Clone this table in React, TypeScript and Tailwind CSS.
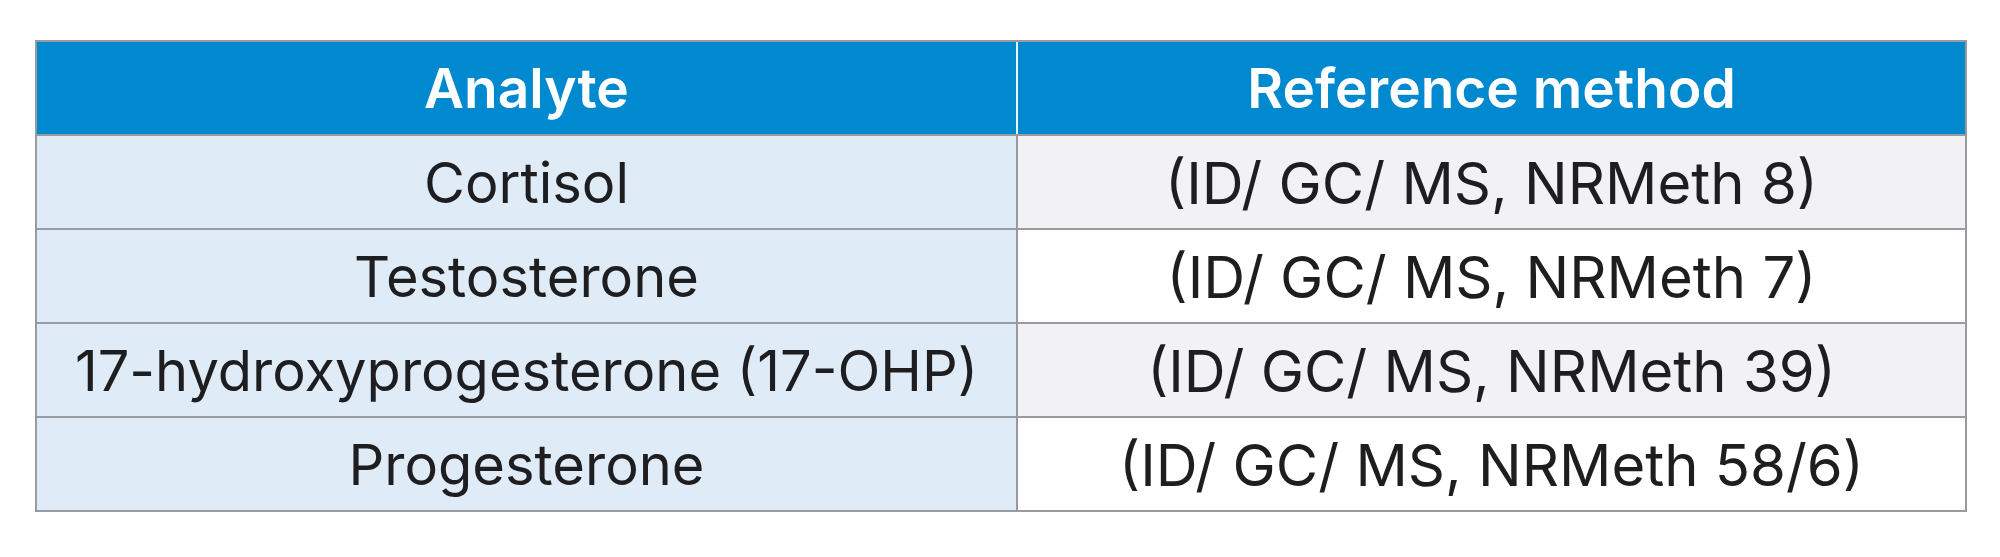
const rows = [
    { analyte: "Cortisol", method: "(ID/ GC/ MS, NRMeth 8)" },
    { analyte: "Testosterone", method: "(ID/ GC/ MS, NRMeth 7)" },
    { analyte: "17-hydroxyprogesterone (17-OHP)", method: "(ID/ GC/ MS, NRMeth 39)" },
    { analyte: "Progesterone", method: "(ID/ GC/ MS, NRMeth 58/6)" },
];

export default function App() {
    return (
        <div className="w-[2000px] h-[557px] bg-white pt-[40px] pl-[35px] font-['Inter',sans-serif]">
            <div className="w-[1932px] border-2 border-[#979ba0]">
                <div className="grid grid-cols-[981px_1fr] h-[92px] bg-[#0089cf] text-white font-semibold text-[55px]">
                    <div className="flex items-center justify-center border-r-2 border-[#e8f3fa]">Analyte</div>
                    <div className="flex items-center justify-center">Reference method</div>
                </div>
                {rows.map((row, i) => (
                    <div
                        key={row.analyte}
                        className="grid grid-cols-[981px_1fr] h-[94px] border-t-2 border-[#979ba0] text-[#1e1e20]"
                    >
                        <div className="flex items-center justify-center bg-[#dfebf7] border-r-2 border-[#979ba0] text-[56px] pt-[2px]">
                            {row.analyte}
                        </div>
                        <div className={`flex items-center justify-center text-[58px] pt-[2px] ${i % 2 === 0 ? "bg-[#f2f2f4]" : "bg-white"}`}>
                            {row.method}
                        </div>
                    </div>
                ))}
            </div>
        </div>
    );
}
